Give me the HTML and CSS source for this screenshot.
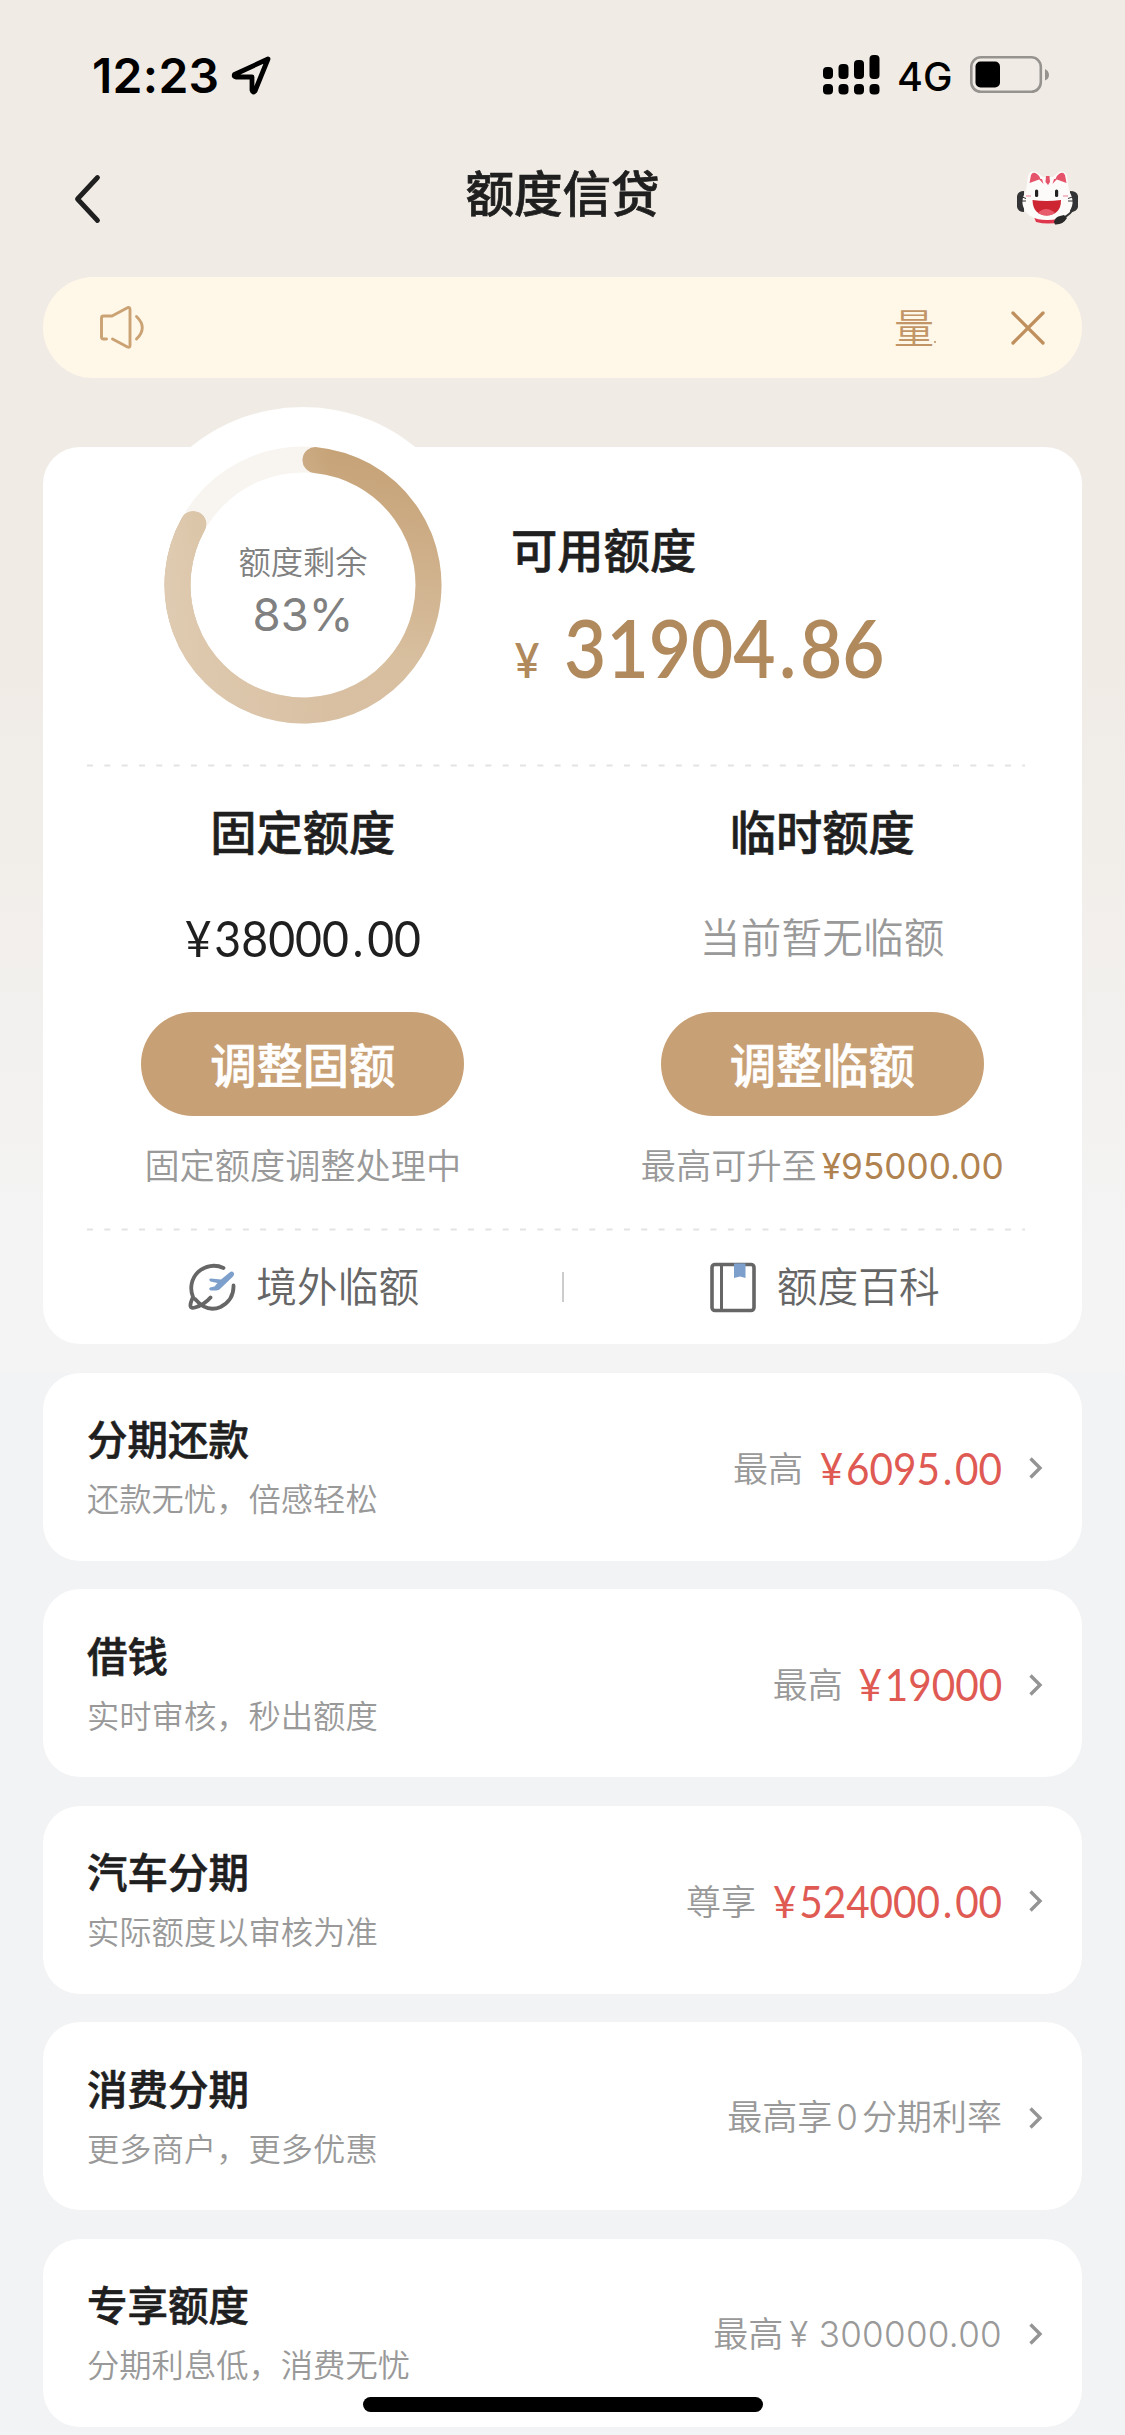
FILE: index.html
```html
<!DOCTYPE html>
<html lang="zh-CN">
<head>
<meta charset="utf-8">
<title>额度信贷</title>
<link rel="stylesheet" href="styles.css">
</head>
<body>
<div class="screen">
  <div class="status">
    <span class="clock">12:23</span>
    <svg class="location" width="42" height="42" viewBox="0 0 42 42"><path d="M38 5 4.500 20.500Q3.500 23 6 23H22V36Q23 39.500 25 37Z" fill="none" stroke="#000" stroke-width="4.800" stroke-linejoin="round"/></svg>
    <svg class="signal" width="57" height="40" viewBox="0 0 57 40"><g><rect x="0" y="12" width="10" height="12" rx="4"/><rect x="15.500" y="9" width="10" height="15" rx="4"/><rect x="31" y="5" width="10" height="19" rx="4"/><rect x="46.500" y="0" width="10" height="24" rx="4"/><rect x="0" y="29" width="10" height="10.500" rx="4"/><rect x="15.500" y="29" width="10" height="10.500" rx="4"/><rect x="31" y="29" width="10" height="10.500" rx="4"/><rect x="46.500" y="29" width="10" height="10.500" rx="4"/></g></svg>
    <span class="network">4G</span>
    <svg class="battery" width="80" height="38" viewBox="0 0 80 38"><rect x="1.300" y="1.300" width="69.500" height="34.500" rx="9.500" fill="none" stroke="#96938f" stroke-width="2.600"/><rect x="5.500" y="5.500" width="24.500" height="26" rx="5"/><path d="M75 13q4 2 4 6t-4 5.500z" fill="#96938f"/></svg>
  </div>

  <header class="nav">
    <svg width="30" height="50" viewBox="0 0 30 50"><path d="M25.500 3.500 5.500 25l20 21.500" fill="none" stroke="#1f1f1f" stroke-width="4.800" stroke-linecap="round" stroke-linejoin="round"/></svg>
    <h1 class="title">额度信贷</h1>
    <svg class="mascot" width="62" height="56" viewBox="0 0 62 56">
      <path d="M7 20v21q-6 0-7-5V25q1-5 7-5zM53 20v21q7 0 8-5V25q-1-5-8-5z" fill="#333435"/>
      <path d="M17 46q13 5 28 0l-1 5q-13 3-25 0z" fill="#e0364d"/>
      <path d="M9 20 11 5Q13-1 19 1l7 5h10l6-5q6-2 8 4l2 15q5 8 3 15-4 14-24.500 14T6 35q-2-7 3-15z" fill="#fdfafa"/>
      <path d="M12.500 12 14 4q2-4 6-1 3 2 3.500 5zM49.500 12 48 4q-2-4-6-1-3 2-3.500 5z" fill="#e5536a"/>
      <path d="M29 5h3.500l.5 6-2 3-2.500-3zM22 8l3 0 1.500 5zM40 8l-3 0-1.500 5z" fill="#e5536a"/>
      <rect x="18" y="18.500" width="3.200" height="7.500" rx="1.600" fill="#222"/><rect x="38" y="18.500" width="3.200" height="7.500" rx="1.600" fill="#222"/>
      <path d="M15.500 29q14 2 28.500 0 0 15-14.500 15.500Q16 44 15.500 29z" fill="#cd2632"/><path d="M21 42q8-8 17 0-8 5-17 0z" fill="#e85b6d"/>
      <path d="M4 25.500l5 2M4 30h5M57 25.500l-6 2M57 30h-6" stroke="#333" stroke-width="1"/>
      <path d="M9 25h5M46 25h5" stroke="#f4bcc4" stroke-width="2"/>
      <path d="M57 37q-3 6-11 10" fill="none" stroke="#333435" stroke-width="1.800"/><path d="M37 51q1-5 6-6l4-1 3 3q-4 7-12 6.500z" fill="#29292a"/>
    </svg>
  </header>

  <div class="notice">
    <svg width="48" height="46" viewBox="0 0 48 46"><path d="M8.500 34H5.500Q3.500 34 3.500 32V13Q3.500 11 5.500 11H14L29.500 2.700Q32 2 32 4.500V40.500Q32 43 29.500 42L14.500 34M38.500 11.500Q50 22.500 38.500 34" fill="none" stroke="#cba273" stroke-width="2.900" stroke-linecap="round" stroke-linejoin="round"/></svg>
    <span class="notice-text">量<i class="speck"></i></span>
    <svg width="36" height="36" viewBox="0 0 36 36"><path d="M3 3 33 33M33 3 3 33" stroke="#bf8f5d" stroke-width="3.300" stroke-linecap="round"/></svg>
  </div>

  <section class="card summary">
    <div class="overview">
      <div class="gauge">
        <svg class="ring" width="356" height="356" viewBox="-178 -178 356 356">
          <defs><linearGradient id="gold" gradientUnits="userSpaceOnUse" x1="30" y1="-138" x2="-20" y2="138"><stop offset="0" stop-color="#c6a277"/><stop offset=".7" stop-color="#d8bf9f"/><stop offset="1" stop-color="#d9c0a4"/></linearGradient>
          <linearGradient id="fade" gradientUnits="userSpaceOnUse" x1="-138" y1="0" x2="138" y2="0"><stop offset="0" stop-color="#dfcbb1"/><stop offset=".6" stop-color="#dfcbb1" stop-opacity="0"/></linearGradient></defs>
          <circle r="178" fill="#fff"/>
          <circle r="125.500" fill="none" stroke="#f8f5f1" stroke-width="26"/>
          <path d="M12.500-124.900A125.500 125.500 0 1 1-109.800-60.800" fill="none" stroke="url(#gold)" stroke-width="26" stroke-linecap="round"/>
          <path d="M12.500-124.900A125.500 125.500 0 1 1-109.800-60.800" fill="none" stroke="url(#fade)" stroke-width="26" stroke-linecap="round"/>
        </svg>
        <div class="gauge-label"><span>额度剩余</span><b>83%</b></div>
      </div>
      <div class="available">
        <h2 class="heading">可用额度</h2>
        <p class="balance"><span class="yen">¥</span>31904<span class="dot">.</span>86</p>
      </div>
    </div>
    <svg class="rule" width="941" height="3"><path d="M3 1.500H941" stroke="#e3e3e3" stroke-width="2" stroke-dasharray="6 11.320"/></svg>
    <div class="limits">
      <div class="limit">
        <h2 class="heading">固定额度</h2>
        <p class="fixed-amount"><span class="yen">¥</span>38000<span class="dot">.</span>00</p>
        <button class="button">调整固额</button>
        <p class="hint">固定额度调整处理中</p>
      </div>
      <div class="limit">
        <h2 class="heading">临时额度</h2>
        <p class="none">当前暂无临额</p>
        <button class="button">调整临额</button>
        <p class="hint">最高可升至<span class="hint-amount">¥95000.00</span></p>
      </div>
    </div>
    <svg class="rule" width="941" height="3"><path d="M3 1.500H941" stroke="#e3e3e3" stroke-width="2" stroke-dasharray="6 11.320"/></svg>
    <div class="links">
      <a class="link"><svg width="50" height="52" viewBox="0 0 50 52"><path d="M36.500 7A22.500 22.500 0 0 0 6 36Q0 49 8 46.500 17 44 23.500 36.500M8 38Q20 52 33.500 46 47 39 46.500 24.500" fill="none" stroke="#666" stroke-width="3.800" stroke-linecap="round"/><path d="M42 12q3-2.500 4.500-.5t-1 4.500L34 27q-2 2.500-5 2.500h-5q-3-1-1-3l4.500-1 3-3.500-7-1.500q-2.500-2 0-3l10.500 1z" fill="#7c9fcb"/></svg><span>境外临额</span></a>
      <i class="divider"></i>
      <a class="link"><svg width="50" height="52" viewBox="0 0 50 52"><rect x="4" y="3.500" width="42" height="46" rx="3" fill="none" stroke="#666" stroke-width="3.600"/><path d="M13.500 3v46" stroke="#666" stroke-width="3"/><path d="M26 2.500h11.500V17L32 15.500 26 17z" fill="#7c9fcb"/></svg><span>额度百科</span></a>
    </div>
  </section>

  <section class="card product">
    <div class="intro"><h3>分期还款</h3><p>还款无忧，倍感轻松</p></div>
    <div class="offer"><span>最高</span><strong><span class="yen">¥</span>6095<span class="dot">.</span>00</strong></div>
    <svg class="chevron" width="16" height="26" viewBox="0 0 16 26"><path d="M2.500 3.500 12 13 2.500 22.500" fill="none" stroke="#949494" stroke-width="3.400"/></svg>
  </section>
  <section class="card product">
    <div class="intro"><h3>借钱</h3><p>实时审核，秒出额度</p></div>
    <div class="offer"><span>最高</span><strong class="short"><span class="yen">¥</span>19000</strong></div>
    <svg class="chevron" width="16" height="26" viewBox="0 0 16 26"><path d="M2.500 3.500 12 13 2.500 22.500" fill="none" stroke="#949494" stroke-width="3.400"/></svg>
  </section>
  <section class="card product">
    <div class="intro"><h3>汽车分期</h3><p>实际额度以审核为准</p></div>
    <div class="offer"><span>尊享</span><strong class="long"><span class="yen">¥</span>524000<span class="dot">.</span>00</strong></div>
    <svg class="chevron" width="16" height="26" viewBox="0 0 16 26"><path d="M2.500 3.500 12 13 2.500 22.500" fill="none" stroke="#949494" stroke-width="3.400"/></svg>
  </section>
  <section class="card product">
    <div class="intro"><h3>消费分期</h3><p>更多商户，更多优惠</p></div>
    <div class="offer"><span>最高享<span class="zero">0</span>分期利率</span></div>
    <svg class="chevron" width="16" height="26" viewBox="0 0 16 26"><path d="M2.500 3.500 12 13 2.500 22.500" fill="none" stroke="#949494" stroke-width="3.400"/></svg>
  </section>
  <section class="card product">
    <div class="intro"><h3>专享额度</h3><p>分期利息低，消费无忧</p></div>
    <div class="offer"><span>最高<span class="plain">¥ 300000.00</span></span></div>
    <svg class="chevron" width="16" height="26" viewBox="0 0 16 26"><path d="M2.500 3.500 12 13 2.500 22.500" fill="none" stroke="#949494" stroke-width="3.400"/></svg>
  </section>
  <i class="home-bar"></i>
</div>
</body>
</html>
```
FILE: styles.css
```css
* { box-sizing: border-box; margin: 0; padding: 0; }
body { background: #f2f3f5; }
svg { display: block; flex: none; }
i { font-style: normal; }

.screen {
  position: relative;
  width: 1125px;
  height: 2435px;
  overflow: hidden;
  display: flex;
  flex-direction: column;
  padding: 0 43px;
  font-family: "Noto Sans CJK SC", sans-serif;
  color: #1f1f1f;
  background: linear-gradient(#f0ebe5 0, #f0ebe5 650px, #f4f4f4 1240px, #f4f4f4 1373px, #f2f3f5 1373px);
}

.status {
  display: flex;
  align-items: center;
  height: 150px;
  padding: 0 32px 0 49px;
  color: #000;
  font-family: Inter, sans-serif;
}
.clock { width: 138px; font-size: 48px; font-weight: 600; letter-spacing: .3px; }
.signal { margin-left: auto; }
.network { width: 73px; margin: 3px 0 0 17px; font-size: 39.500px; font-weight: 500; }

.nav {
  display: flex;
  align-items: center;
  justify-content: space-between;
  height: 98px;
  padding: 0 3px 0 29px;
}
.title { font-size: 48.500px; font-weight: 500; line-height: 60px; margin: -17px 0 0 6px; -webkit-text-stroke: .7px; }

.notice {
  display: flex;
  align-items: center;
  height: 101px;
  margin-top: 29px;
  padding: 0 36px 0 55px;
  border-radius: 51px;
  background: #fff8e9;
}
.notice-text { display: flex; align-items: flex-end; margin: -3px 74px 0 auto; font-size: 40px; line-height: 60px; font-weight: 350; color: #c29566; }
.speck { width: 2px; height: 2px; margin-bottom: 13px; background: #cba982; }

.card { flex: none; border-radius: 37px; background: #fff; }

.summary { height: 897px; margin-top: 69px; }
.overview { display: flex; height: 317px; }
.gauge { position: relative; width: 356px; height: 356px; margin: -40px 0 0 82px; }
.ring { position: absolute; inset: 0; }
.gauge-label { position: relative; display: flex; flex-direction: column; align-items: center; padding-top: 130px; color: #808080; font-size: 32.300px; line-height: 46px; font-weight: 350; }
.gauge-label b { font: 400 45.500px/54px Inter, sans-serif; margin-top: 5px; }
.available { padding: 73px 0 0 30px; }
.heading { font-size: 46.300px; line-height: 56px; font-weight: 500; -webkit-text-stroke: .6px; }
.balance { display: flex; align-items: baseline; margin-top: 26px; color: #b0895d; font: 600 81px/90px Lato, sans-serif; transform: scaleX(.9); transform-origin: left; }
.balance .yen { width: 55px; margin-left: 4px; font-size: 48px; }
.balance .dot { padding: 0 4px; }

.rule { margin-left: 41px; }
.limits { display: flex; height: 461px; }
.limit { width: 50%; display: flex; flex-direction: column; align-items: center; padding-top: 35px; }
.fixed-amount { display: flex; align-items: baseline; font: 400 51px/63px Lato, sans-serif; transform: scaleX(.91); }
.fixed-amount .yen { margin-right: 3px; }
.fixed-amount .dot { padding: 0 4px; }
.none { font-size: 40.500px; letter-spacing: .3px; color: #999; font-weight: 350; line-height: 60px; }
.fixed-amount, .none { height: 60px; margin: 48px 0 46px; }
.button { width: 323px; height: 104px; border: 0; border-radius: 52px; background: #c8a075; color: #fff; font: 500 46.300px/98px "Noto Sans CJK SC", sans-serif; padding-bottom: 2px; -webkit-text-stroke: .6px; }
.hint { margin-top: 23px; color: #999; font-size: 35.200px; font-weight: 350; line-height: 50px; white-space: nowrap; }
.hint-amount { margin-left: 5px; color: #b0824f; font-family: Inter, sans-serif; font-weight: 400; }

.links { display: flex; align-items: center; height: 111px; }
.link { flex: 1; display: flex; align-items: center; justify-content: center; gap: 19px; padding-left: 2px; color: #666; font-size: 40.700px; font-weight: 350; line-height: 60px; }
.link span { margin-top: -4px; }
.divider { width: 2px; height: 30px; background: #ccc; }

.product { display: flex; align-items: center; height: 188px; margin-top: 28.500px; padding: 0 38px 0 44px; }
.intro { margin-top: -2px; }
.intro h3 { font-size: 40.500px; line-height: 54px; font-weight: 500; -webkit-text-stroke: .6px; }
.intro p { margin-top: 9px; color: #999; font-size: 32.300px; line-height: 46px; font-weight: 350; }
.offer { display: flex; align-items: center; margin-left: auto; margin-right: 26px; color: #999; font-size: 35px; font-weight: 350; line-height: 50px; }
.offer strong { display: flex; margin: 2px 0 0 1px; color: #e05a54; font: 400 44px/50px Lato, sans-serif; transform: scaleX(.92); transform-origin: right; }
.offer .short { margin-left: 3px; }
.offer .long { margin-left: -3px; }
.offer .yen { margin-right: 3px; }
.offer .dot { padding: 0 3px; }
.zero, .plain { font-family: Inter, sans-serif; }
.zero { padding: 0 4px; }
.plain { margin-left: 6px; letter-spacing: .3px; }
.chevron { margin-top: 3px; }

.home-bar { position: absolute; left: 363px; top: 2397px; width: 400px; height: 15px; border-radius: 8px; background: #000; }
```
